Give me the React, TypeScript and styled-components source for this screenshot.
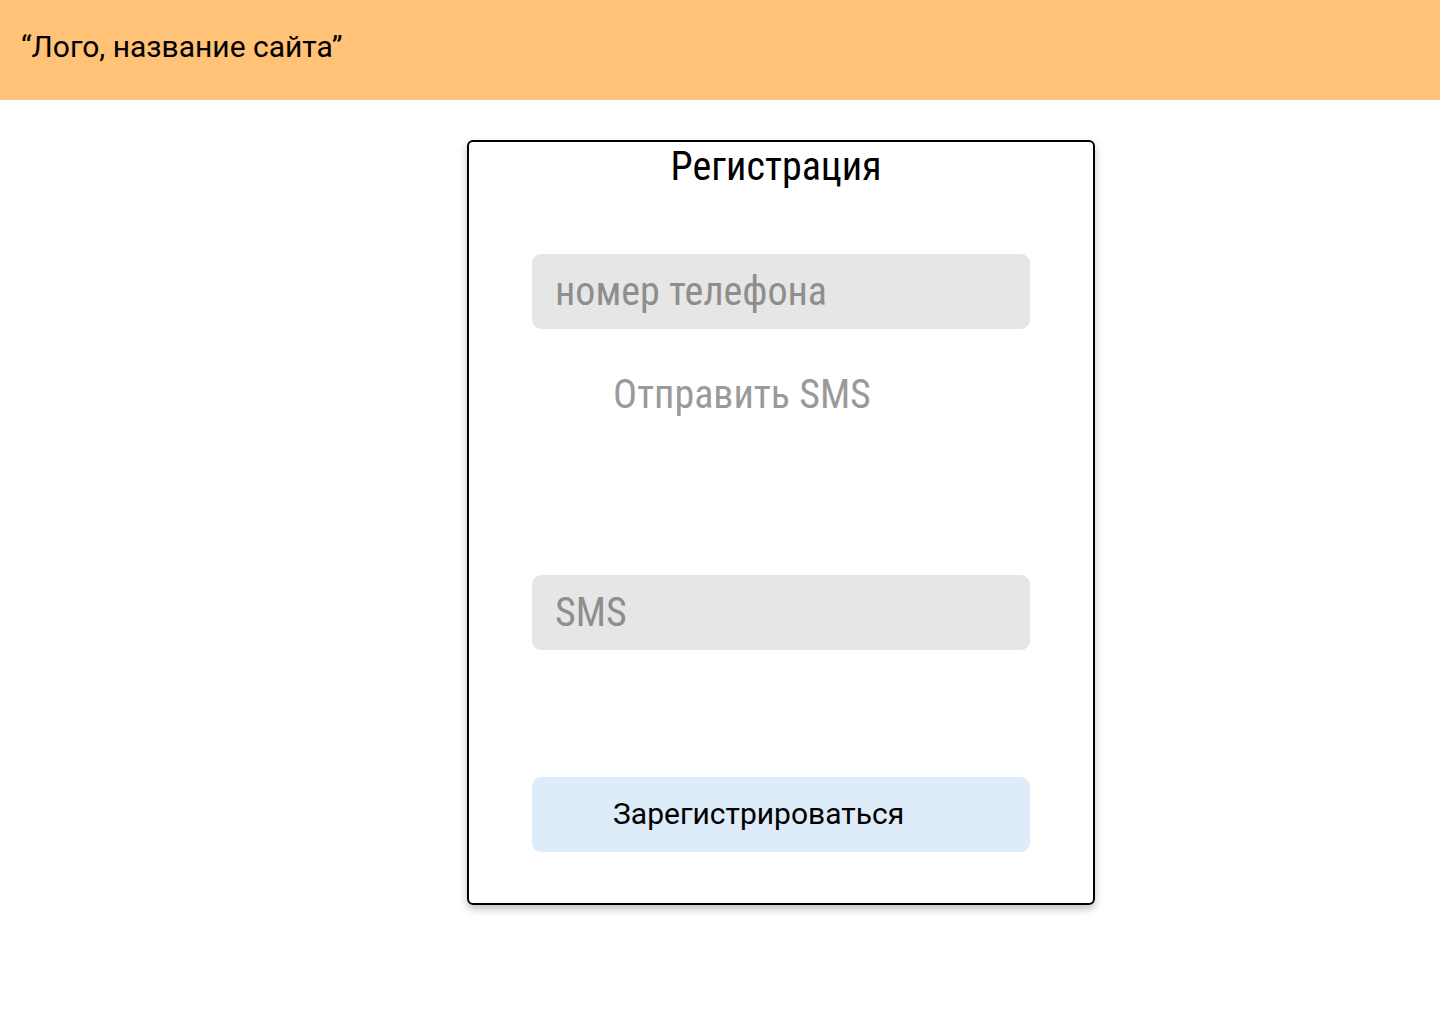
import React from "react";
import styled, { createGlobalStyle } from "styled-components";

const Global = createGlobalStyle`
  html, body { margin: 0; padding: 0; background: #ffffff; }
  body { font-family: Roboto, "Liberation Sans", sans-serif; }
  * { box-sizing: border-box; }
`;

const Page = styled.div`
  width: 1440px;
  min-height: 1024px;
  display: flex;
  flex-direction: column;
`;

const Header = styled.header`
  height: 100px;
  background: #ffc276;
  display: flex;
  align-items: center;
  padding: 0 0 8px 21px;
  font-family: Roboto, sans-serif;
  font-size: 30px;
  color: #000;
`;

const Main = styled.main`
  display: flex;
  justify-content: flex-start;
  padding: 40px 0 0 467px;
`;

const Card = styled.section`
  width: 628px;
  height: 765px;
  border: 2px solid #000;
  border-radius: 6px;
  box-shadow: 0 4px 8px rgba(0, 0, 0, 0.25);
  display: flex;
  flex-direction: column;
  align-items: flex-start;
  padding: 0 0 0 63px;
`;

const Title = styled.h1`
  margin: 0 0 0 -63px;
  align-self: stretch;
  text-align: center;
  font-family: "Roboto Condensed", Roboto, sans-serif;
  font-weight: 400;
  font-size: 40px;
  line-height: 50px;
  padding-right: 10px;
  color: #000;
`;

const Field = styled.div<{ $top: number; $tone?: string }>`
  margin-top: ${(p) => p.$top}px;
  width: 498px;
  height: 75px;
  border-radius: 9px;
  background: ${(p) => p.$tone || "#e6e6e6"};
  display: flex;
  align-items: center;
  padding-left: 23px;
`;

const Placeholder = styled.span`
  font-family: "Roboto Condensed", Roboto, sans-serif;
  font-size: 40px;
  color: #8e8e8e;
`;

const LinkText = styled.div`
  margin-top: 44px;
  margin-left: 81px;
  font-family: "Roboto Condensed", Roboto, sans-serif;
  font-size: 40px;
  line-height: 44px;
  color: #9a9a9a;
`;

const ButtonText = styled.span`
  font-family: Roboto, sans-serif;
  font-size: 30px;
  color: #000;
  padding-left: 58px;
  margin-bottom: 3px;
`;

export default function App() {
  return (
    <Page>
      <Global />
      <Header>“Лого, название сайта”</Header>
      <Main>
        <Card>
          <Title>Регистрация</Title>
          <Field $top={62}>
            <Placeholder>номер телефона</Placeholder>
          </Field>
          <LinkText>Отправить SMS</LinkText>
          <Field $top={158}>
            <Placeholder>SMS</Placeholder>
          </Field>
          <Field $top={127} $tone="#deebf9">
            <ButtonText>Зарегистрироваться</ButtonText>
          </Field>
        </Card>
      </Main>
    </Page>
  );
}
